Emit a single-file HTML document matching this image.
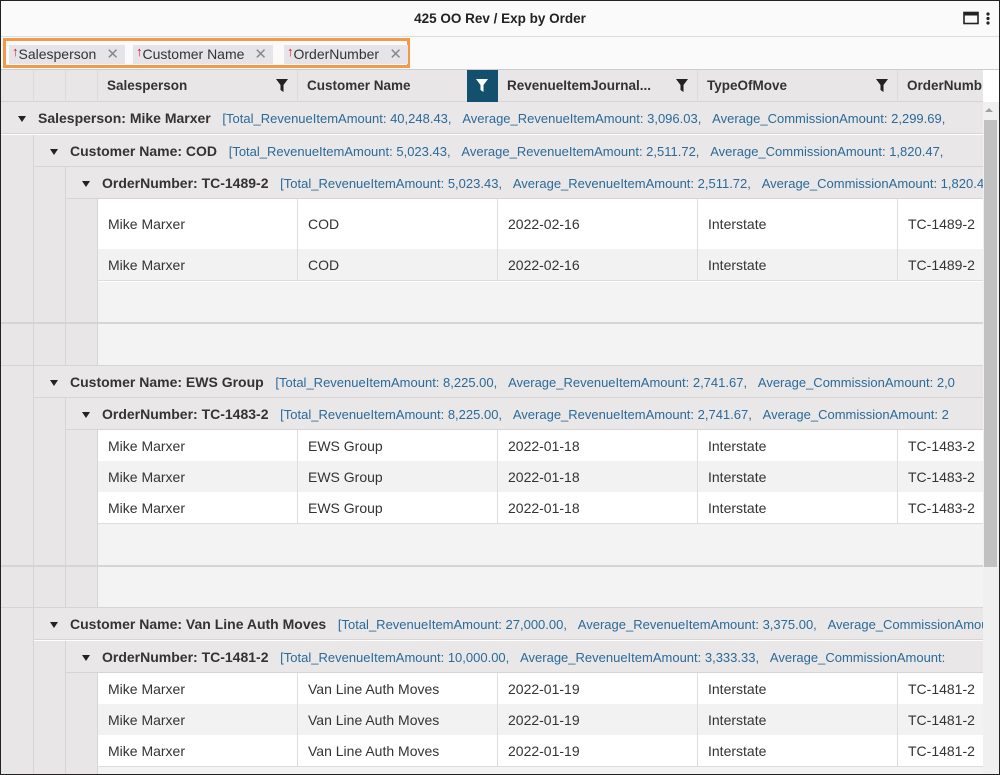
<!DOCTYPE html>
<html><head><style>
*{margin:0;padding:0;box-sizing:border-box}
body{width:1000px;height:775px;overflow:hidden;font-family:"Liberation Sans",sans-serif;font-size:13.5px;color:#333;background:#fff}
#w{position:absolute;left:0;top:0;width:1000px;height:775px;border:1px solid #222;overflow:hidden;background:#fff}
.a{position:absolute}
.title{left:0;top:0;width:998px;height:36px;background:#fafafa;border-bottom:1px solid #ddd;text-align:center;line-height:35px;font-weight:bold;color:#222;font-size:13.5px}
.gp{left:0;top:36px;width:998px;height:33px;background:#fafafb;border-bottom:1px solid #ccc}
.ob{left:2px;top:37px;width:407px;height:30px;border:3px solid #f29a4a}
.chip{position:absolute;top:4px;height:19px;background:#e5e5e9;line-height:19px;font-size:14px;color:#333;padding-left:3px}
.chip .up{color:#e0102a;font-size:13px;font-weight:bold;vertical-align:top;line-height:14px}
.chip .x{position:absolute;right:6px;top:0;color:#888;font-size:15px}
.hdr{left:0;top:69px;width:982px;height:32px;background:#e8e6e6;border-bottom:1px solid #d6d4d4}
.hc{position:absolute;top:0;height:32px;line-height:32px;font-weight:bold;padding-left:9px;color:#333;border-right:1px solid #dcdada}
.flt{position:absolute;top:9px;width:12px;height:13px}
.grp{position:absolute;height:32px;background:#e9e7e7;border-bottom:1px solid #d6d4d4;white-space:nowrap;overflow:hidden;line-height:32px;font-size:14px}
.grp b{color:#333}
.grp span{color:#2b6a9a;font-size:13px}
.tri{display:inline-block;width:0;height:0;border-left:4px solid transparent;border-right:4px solid transparent;border-top:6px solid #222;margin-right:12px;vertical-align:1px}
.ind{position:absolute;background:#e8e6e6;border-right:1px solid #d6d4d4}
.row{position:absolute;left:97px;width:885px}
.row div{position:absolute;top:0;height:100%;padding-left:10px;border-right:1px solid #ddd;display:flex;align-items:center;color:#333;font-size:14px}
.last{border-bottom:1px solid #ddd}
.sum{position:absolute;left:97px;width:885px;background:#f3f3f3}
.sb{left:982px;top:101px;width:16px;height:673px;background:#f0f0f0}
</style></head><body><div id="w">
<div class="a title">425 OO Rev / Exp by Order</div>
<svg class="a" style="left:962px;top:10px" width="30" height="16"><rect x="1" y="1.5" width="14" height="11" fill="none" stroke="#222" stroke-width="1.6"/><rect x="1" y="1.5" width="14" height="3" fill="#222"/><circle cx="25" cy="3" r="1.6" fill="#222"/><circle cx="25" cy="7.5" r="1.6" fill="#222"/><circle cx="25" cy="12" r="1.6" fill="#222"/></svg>
<div class="a gp"></div>
<div class="a ob">
<div class="chip" style="left:3px;width:116px"><span class="up">↑</span>Salesperson<span class="x">✕</span></div>
<div class="chip" style="left:127px;width:140px"><span class="up">↑</span>Customer Name<span class="x">✕</span></div>
<div class="chip" style="left:278px;width:124px"><span class="up">↑</span>OrderNumber<span class="x">✕</span></div>
</div>
<div class="a hdr">
<div class="hc" style="left:0;width:33px;padding:0"></div>
<div class="hc" style="left:33px;width:32px;padding:0"></div>
<div class="hc" style="left:65px;width:32px;padding:0"></div>
<div class="hc" style="left:97px;width:200px">Salesperson<svg class="flt" style="left:178px" viewBox="0 0 12 13"><path d="M0 0H12L7.5 6V13L4.5 11V6Z" fill="#222"/></svg></div>
<div class="hc" style="left:297px;width:200px">Customer Name<div style="position:absolute;left:169px;top:0;width:31px;height:32px;background:#12506e"><svg class="flt" style="left:9px" viewBox="0 0 12 13"><path d="M0 0H12L7.5 6V13L4.5 11V6Z" fill="#fff"/></svg></div></div>
<div class="hc" style="left:497px;width:200px">RevenueItemJournal...<svg class="flt" style="left:178px" viewBox="0 0 12 13"><path d="M0 0H12L7.5 6V13L4.5 11V6Z" fill="#222"/></svg></div>
<div class="hc" style="left:697px;width:200px">TypeOfMove<svg class="flt" style="left:178px" viewBox="0 0 12 13"><path d="M0 0H12L7.5 6V13L4.5 11V6Z" fill="#222"/></svg></div>
<div class="hc" style="left:897px;width:85px;overflow:hidden;white-space:nowrap;border:none">OrderNumb</div>
</div>

<div class="ind" style="left:0;top:134px;width:33px;height:641px"></div>
<div class="ind" style="left:33px;top:166px;width:32px;height:199px"></div>
<div class="ind" style="left:65px;top:198px;width:32px;height:167px"></div>
<div class="ind" style="left:33px;top:397px;width:32px;height:210px"></div>
<div class="ind" style="left:65px;top:429px;width:32px;height:178px"></div>
<div class="ind" style="left:33px;top:640px;width:32px;height:135px"></div>
<div class="ind" style="left:65px;top:672px;width:32px;height:103px"></div>

<div class="grp" style="left:0;top:101px;width:982px;padding-left:17px"><i class="tri"></i><b>Salesperson: Mike Marxer</b> &nbsp;&nbsp;<span>[Total_RevenueItemAmount: 40,248.43, &nbsp;&nbsp;Average_RevenueItemAmount: 3,096.03, &nbsp;&nbsp;Average_CommissionAmount: 2,299.69,</span></div>
<div class="grp" style="left:33px;top:134px;width:949px;padding-left:16px"><i class="tri"></i><b>Customer Name: COD</b> &nbsp;&nbsp;<span>[Total_RevenueItemAmount: 5,023.43, &nbsp;&nbsp;Average_RevenueItemAmount: 2,511.72, &nbsp;&nbsp;Average_CommissionAmount: 1,820.47,</span></div>
<div class="grp" style="left:65px;top:166px;width:917px;padding-left:16px"><i class="tri"></i><b>OrderNumber: TC-1489-2</b> &nbsp;&nbsp;<span>[Total_RevenueItemAmount: 5,023.43, &nbsp;&nbsp;Average_RevenueItemAmount: 2,511.72, &nbsp;&nbsp;Average_CommissionAmount: 1,820.47</span></div>
<div class="row" style="top:198px;height:50px;background:#fff"><div style="left:0;width:200px">Mike Marxer</div><div style="left:200px;width:200px">COD</div><div style="left:400px;width:200px">2022-02-16</div><div style="left:600px;width:200px">Interstate</div><div style="left:800px;width:85px;border:none">TC-1489-2</div></div>
<div class="row last" style="top:248px;height:32px;background:#f2f2f2"><div style="left:0;width:200px">Mike Marxer</div><div style="left:200px;width:200px">COD</div><div style="left:400px;width:200px">2022-02-16</div><div style="left:600px;width:200px">Interstate</div><div style="left:800px;width:85px;border:none">TC-1489-2</div></div>
<div class="sum" style="top:281px;height:41px"></div>
<div class="a" style="left:0;top:321px;width:982px;height:2px;background:#d6d4d4"></div>
<div class="sum" style="top:323px;height:42px"></div>
<div class="a" style="left:0;top:364px;width:982px;height:1px;background:#d6d4d4"></div>

<div class="grp" style="left:33px;top:365px;width:949px;padding-left:16px"><i class="tri"></i><b>Customer Name: EWS Group</b> &nbsp;&nbsp;<span>[Total_RevenueItemAmount: 8,225.00, &nbsp;&nbsp;Average_RevenueItemAmount: 2,741.67, &nbsp;&nbsp;Average_CommissionAmount: 2,0</span></div>
<div class="grp" style="left:65px;top:397px;width:917px;padding-left:16px"><i class="tri"></i><b>OrderNumber: TC-1483-2</b> &nbsp;&nbsp;<span>[Total_RevenueItemAmount: 8,225.00, &nbsp;&nbsp;Average_RevenueItemAmount: 2,741.67, &nbsp;&nbsp;Average_CommissionAmount: 2</span></div>
<div class="row" style="top:429px;height:31px;background:#fff"><div style="left:0;width:200px">Mike Marxer</div><div style="left:200px;width:200px">EWS Group</div><div style="left:400px;width:200px">2022-01-18</div><div style="left:600px;width:200px">Interstate</div><div style="left:800px;width:85px;border:none">TC-1483-2</div></div>
<div class="row" style="top:460px;height:31px;background:#f2f2f2"><div style="left:0;width:200px">Mike Marxer</div><div style="left:200px;width:200px">EWS Group</div><div style="left:400px;width:200px">2022-01-18</div><div style="left:600px;width:200px">Interstate</div><div style="left:800px;width:85px;border:none">TC-1483-2</div></div>
<div class="row last" style="top:491px;height:32px;background:#fff"><div style="left:0;width:200px">Mike Marxer</div><div style="left:200px;width:200px">EWS Group</div><div style="left:400px;width:200px">2022-01-18</div><div style="left:600px;width:200px">Interstate</div><div style="left:800px;width:85px;border:none">TC-1483-2</div></div>
<div class="sum" style="top:523px;height:41px"></div>
<div class="a" style="left:0;top:564px;width:982px;height:2px;background:#d6d4d4"></div>
<div class="sum" style="top:566px;height:41px"></div>
<div class="a" style="left:0;top:606px;width:982px;height:1px;background:#d6d4d4"></div>

<div class="grp" style="left:33px;top:607px;width:949px;padding-left:16px"><i class="tri"></i><b>Customer Name: Van Line Auth Moves</b> &nbsp;&nbsp;<span>[Total_RevenueItemAmount: 27,000.00, &nbsp;&nbsp;Average_RevenueItemAmount: 3,375.00, &nbsp;&nbsp;Average_CommissionAmount</span></div>
<div class="grp" style="left:65px;top:640px;width:917px;padding-left:16px"><i class="tri"></i><b>OrderNumber: TC-1481-2</b> &nbsp;&nbsp;<span>[Total_RevenueItemAmount: 10,000.00, &nbsp;&nbsp;Average_RevenueItemAmount: 3,333.33, &nbsp;&nbsp;Average_CommissionAmount:</span></div>
<div class="row" style="top:672px;height:31px;background:#fff"><div style="left:0;width:200px">Mike Marxer</div><div style="left:200px;width:200px">Van Line Auth Moves</div><div style="left:400px;width:200px">2022-01-19</div><div style="left:600px;width:200px">Interstate</div><div style="left:800px;width:85px;border:none">TC-1481-2</div></div>
<div class="row" style="top:703px;height:31px;background:#f2f2f2"><div style="left:0;width:200px">Mike Marxer</div><div style="left:200px;width:200px">Van Line Auth Moves</div><div style="left:400px;width:200px">2022-01-19</div><div style="left:600px;width:200px">Interstate</div><div style="left:800px;width:85px;border:none">TC-1481-2</div></div>
<div class="row last" style="top:734px;height:32px;background:#fff"><div style="left:0;width:200px">Mike Marxer</div><div style="left:200px;width:200px">Van Line Auth Moves</div><div style="left:400px;width:200px">2022-01-19</div><div style="left:600px;width:200px">Interstate</div><div style="left:800px;width:85px;border:none">TC-1481-2</div></div>
<div class="sum" style="top:766px;height:10px"></div>

<div class="a sb"></div>
<div class="a" style="left:984px;top:107px;width:0;height:0;border-left:4px solid transparent;border-right:4px solid transparent;border-bottom:4px solid #a0a0a0"></div>
<div class="a" style="left:983px;top:119px;width:13px;height:447px;background:#c1c1c1"></div>
</div></body></html>
